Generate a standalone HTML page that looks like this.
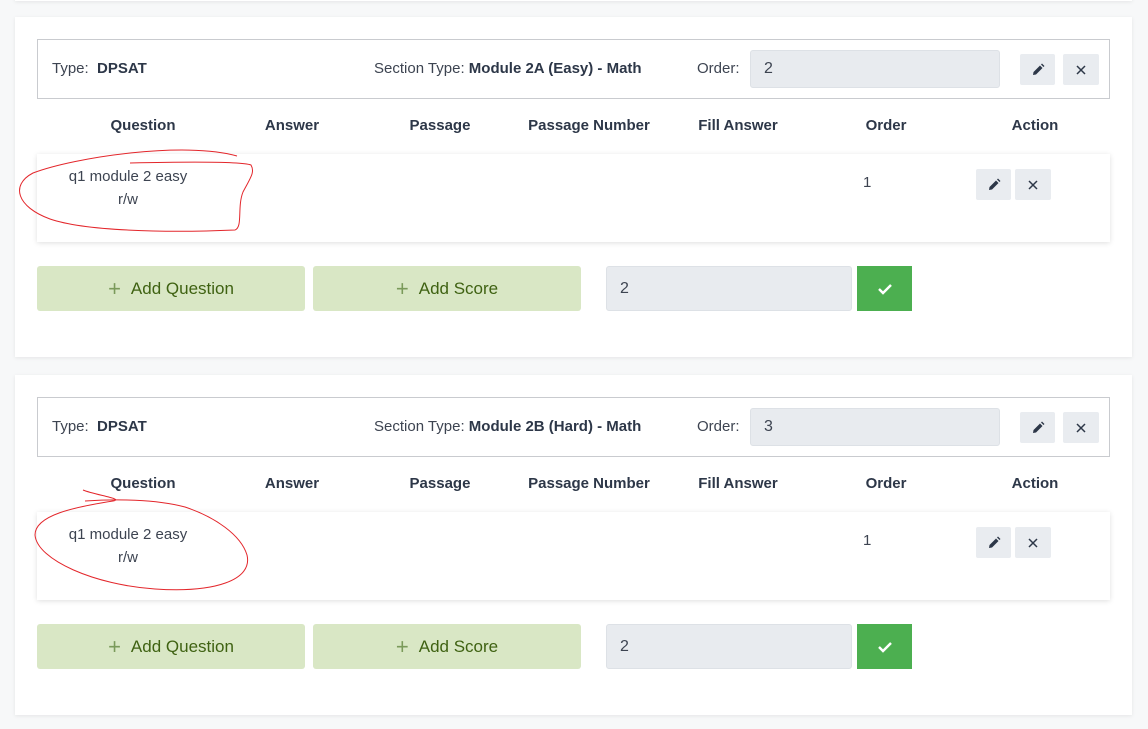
<!DOCTYPE html>
<html><head><style>
body{margin:0;width:1148px;height:729px;background:#f7f8f9;font-family:"Liberation Sans",sans-serif;color:#3d4451;position:relative;overflow:hidden}
.card{position:absolute;left:15px;width:1117px;height:340px;background:#fff;box-shadow:0 1px 4px rgba(0,0,0,.08)}
.a{position:absolute}
.hdr{left:22px;top:22px;width:1071px;height:58px;border:1px solid #c9cbcf;font-size:15px}
.inp{background:#e8ebef;border:1px solid #dde1e6;border-radius:3px;font-size:16px;color:#3d4451;box-sizing:border-box;padding-left:13px;display:flex;align-items:center}
.ib{background:#e9ecf0;border-radius:2px;display:flex;align-items:center;justify-content:center}
.th{top:100px;font-weight:bold;font-size:15px;color:#2d3748;transform:translateX(-50%);white-space:nowrap}
.row{left:22px;top:137px;width:1073px;height:88px;box-shadow:0 1px 5px rgba(0,0,0,.13);background:#fff}
.btn{top:249px;width:268px;height:45px;background:#d9e7c5;border-radius:3px;color:#3f6212;font-size:17px;display:flex;align-items:center;justify-content:center}
.btn span{color:#7a9a5a;font-size:22px;margin-right:10px;font-weight:300}
b{color:#2d3748}
</style></head><body>
<div class="a" style="left:15px;top:-20px;width:1117px;height:21px;background:#fff;box-shadow:0 1px 4px rgba(0,0,0,.08)"></div>

<div class="card" style="top:17px">
 <div class="a hdr">
  <div class="a" style="left:14px;top:20px">Type:&nbsp; <b>DPSAT</b></div>
  <div class="a" style="left:336px;top:20px">Section Type: <b>Module 2A (Easy) - Math</b></div>
  <div class="a" style="left:659px;top:20px">Order:</div>
  <div class="a inp" style="left:712px;top:10px;width:250px;height:38px">2</div>
  <div class="a ib" style="left:982px;top:14px;width:35px;height:31px"><svg width="14" height="14" viewBox="0 0 14 14"><path d="M2 12l.5-3L9 2.5l2.5 2.5L5 11.5z M10 1.5l1-1 2.5 2.5-1 1z" fill="#2d3748"/></svg></div>
  <div class="a ib" style="left:1025px;top:14px;width:36px;height:31px"><svg width="10" height="10"><path d="M1 1l8 8M9 1l-8 8" stroke="#2d3748" stroke-width="1.5"/></svg></div>
 </div>
 <div class="a th" style="left:128px">Question</div>
 <div class="a th" style="left:277px">Answer</div>
 <div class="a th" style="left:425px">Passage</div>
 <div class="a th" style="left:574px">Passage Number</div>
 <div class="a th" style="left:723px">Fill Answer</div>
 <div class="a th" style="left:871px">Order</div>
 <div class="a th" style="left:1020px">Action</div>
 <div class="a row">
  <div class="a" style="left:0;width:182px;top:11px;text-align:center;font-size:15px;line-height:23px">q1 module 2 easy<br>r/w</div>
  <div class="a" style="left:826px;top:20px;font-size:15px">1</div>
  <div class="a ib" style="left:939px;top:15px;width:35px;height:31px"><svg width="14" height="14" viewBox="0 0 14 14"><path d="M2 12l.5-3L9 2.5l2.5 2.5L5 11.5z M10 1.5l1-1 2.5 2.5-1 1z" fill="#2d3748"/></svg></div>
  <div class="a ib" style="left:978px;top:15px;width:36px;height:31px"><svg width="10" height="10"><path d="M1 1l8 8M9 1l-8 8" stroke="#2d3748" stroke-width="1.5"/></svg></div>
 </div>
 <div class="a btn" style="left:22px"><span>+</span>Add Question</div>
 <div class="a btn" style="left:298px"><span>+</span>Add Score</div>
 <div class="a inp" style="left:591px;top:249px;width:246px;height:45px">2</div>
 <div class="a" style="left:842px;top:249px;width:55px;height:45px;background:#4caf50;display:flex;align-items:center;justify-content:center"><svg width="16" height="12"><path d="M2 6l4 4 8-8" stroke="#fff" stroke-width="2.4" fill="none"/></svg></div>
 <svg class="a" style="left:0;top:130px" width="260" height="100"><path d="M222 9C170-6 60 10 18 26C-5 38 2 60 35 72C70 84 150 86 220 83C228 80 222 60 228 45C236 30 240 25 236 18C225 14 160 15 115 16" stroke="#e3262b" fill="none" stroke-width="1"/></svg>
</div>

<div class="card" style="top:375px">
 <div class="a hdr">
  <div class="a" style="left:14px;top:20px">Type:&nbsp; <b>DPSAT</b></div>
  <div class="a" style="left:336px;top:20px">Section Type: <b>Module 2B (Hard) - Math</b></div>
  <div class="a" style="left:659px;top:20px">Order:</div>
  <div class="a inp" style="left:712px;top:10px;width:250px;height:38px">3</div>
  <div class="a ib" style="left:982px;top:14px;width:35px;height:31px"><svg width="14" height="14" viewBox="0 0 14 14"><path d="M2 12l.5-3L9 2.5l2.5 2.5L5 11.5z M10 1.5l1-1 2.5 2.5-1 1z" fill="#2d3748"/></svg></div>
  <div class="a ib" style="left:1025px;top:14px;width:36px;height:31px"><svg width="10" height="10"><path d="M1 1l8 8M9 1l-8 8" stroke="#2d3748" stroke-width="1.5"/></svg></div>
 </div>
 <div class="a th" style="left:128px">Question</div>
 <div class="a th" style="left:277px">Answer</div>
 <div class="a th" style="left:425px">Passage</div>
 <div class="a th" style="left:574px">Passage Number</div>
 <div class="a th" style="left:723px">Fill Answer</div>
 <div class="a th" style="left:871px">Order</div>
 <div class="a th" style="left:1020px">Action</div>
 <div class="a row">
  <div class="a" style="left:0;width:182px;top:11px;text-align:center;font-size:15px;line-height:23px">q1 module 2 easy<br>r/w</div>
  <div class="a" style="left:826px;top:20px;font-size:15px">1</div>
  <div class="a ib" style="left:939px;top:15px;width:35px;height:31px"><svg width="14" height="14" viewBox="0 0 14 14"><path d="M2 12l.5-3L9 2.5l2.5 2.5L5 11.5z M10 1.5l1-1 2.5 2.5-1 1z" fill="#2d3748"/></svg></div>
  <div class="a ib" style="left:978px;top:15px;width:36px;height:31px"><svg width="10" height="10"><path d="M1 1l8 8M9 1l-8 8" stroke="#2d3748" stroke-width="1.5"/></svg></div>
 </div>
 <div class="a btn" style="left:22px"><span>+</span>Add Question</div>
 <div class="a btn" style="left:298px"><span>+</span>Add Score</div>
 <div class="a inp" style="left:591px;top:249px;width:246px;height:45px">2</div>
 <div class="a" style="left:842px;top:249px;width:55px;height:45px;background:#4caf50;display:flex;align-items:center;justify-content:center"><svg width="16" height="12"><path d="M2 6l4 4 8-8" stroke="#fff" stroke-width="2.4" fill="none"/></svg></div>
 <svg class="a" style="left:0;top:110px" width="260" height="110"><path d="M68 5C80 10 110 14 98 16C60 22 20 30 20 50C22 75 80 100 140 104C200 108 238 95 232 70C226 50 200 32 170 22C140 14 100 14 70 16" stroke="#e3262b" fill="none" stroke-width="1"/></svg>
</div>
</body></html>
